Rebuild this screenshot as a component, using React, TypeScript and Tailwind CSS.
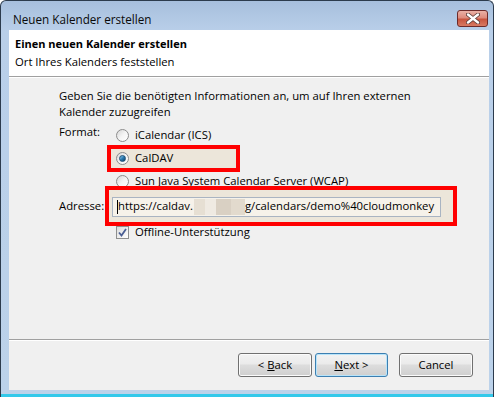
import React from 'react';

const font = { fontFamily: '"Open Sans", "Noto Sans", sans-serif' };

const Radio = ({ checked }: { checked?: boolean }) => (
  <span className="relative flex h-[13px] w-[13px] shrink-0 items-center justify-center rounded-full border border-[#8c8c8c] bg-gradient-to-br from-[#d6d6d6] via-[#f4f4f4] to-white">
    {checked && (
      <span className="h-[7px] w-[7px] rounded-full border border-[#1d4f74] bg-gradient-to-br from-[#8fd0f2] via-[#2a7ab0] to-[#10436b]" />
    )}
  </span>
);

const Checkbox = () => (
  <span className="flex h-[13px] w-[13px] shrink-0 items-center justify-center border border-[#8e8f8f] bg-gradient-to-br from-[#dcdcdc] to-white">
    <svg width="9" height="9" viewBox="0 0 9 9">
      <path d="M1 4.5 L3.5 7.5 L8 1" fill="none" stroke="#4a5e94" strokeWidth="1.8" />
    </svg>
  </span>
);

const Button = ({ children, focused }: { children: React.ReactNode; focused?: boolean }) => (
  <div
    className={`flex h-[24px] items-center justify-center rounded-[3px] border bg-[linear-gradient(#f2f2f2_0%,#ebebeb_45%,#dddddd_50%,#cfcfcf_100%)] text-[11.3px] text-black ${
      focused ? 'border-[#3c7fb1] shadow-[inset_0_0_0_1px_#b8e4fa]' : 'border-[#707070] shadow-[inset_0_0_0_1px_#fbfbfb]'
    }`}
  >
    {children}
  </div>
);

const CloseButton = () => (
  <div className="flex h-[17px] w-[31px] items-center justify-center rounded-[3px] border border-[#6d2b2a] bg-[linear-gradient(#eab1a6_0%,#df8c7d_45%,#c8553f_55%,#d87a62_100%)]">
    <svg width="14" height="11" viewBox="0 0 14 11">
      <path d="M2 1.5 L12 9.5 M12 1.5 L2 9.5" stroke="#5a3a36" strokeWidth="4" strokeLinecap="round" />
      <path d="M2 1.5 L12 9.5 M12 1.5 L2 9.5" stroke="#ffffff" strokeWidth="2.4" strokeLinecap="round" />
    </svg>
  </div>
);

export default function App() {
  return (
    <div className="h-[397px] w-[496px] overflow-hidden bg-white text-[11.3px] text-black" style={font}>
      <div className="flex h-[397px] w-[494px] flex-col rounded-t-[6px] border border-b-0 border-[#2c3b4d] bg-[linear-gradient(#a7bfdd_0px,#b9cfe9_30px,#bcd2ea_100%)]">
        {/* title bar */}
        <div className="flex h-[29px] items-start justify-between pl-[12px] pr-[5px]">
          <span className="mt-[10px] text-[11.7px] leading-[16px] text-[#0a0a0a]">Neuen Kalender erstellen</span>
          <div className="mt-[9px]">
            <CloseButton />
          </div>
        </div>

        {/* client area */}
        <div className="ml-[8px] flex h-[360px] w-[480px] flex-col bg-[#f0f0f0]">
          <div className="h-[46px] bg-white pl-[6px] pt-[5px] leading-[18px]">
            <div className="text-[11px] font-bold">Einen neuen Kalender erstellen</div>
            <div>Ort Ihres Kalenders feststellen</div>
          </div>
          <div className="h-px bg-[#a0a0a0]" />
          <div className="h-px bg-white" />

          <div className="relative flex h-[261px] flex-col pl-[50px] pt-[10px]">
            <p className="leading-[16px]">
              Geben Sie die benötigten Informationen an, um auf Ihren externen
              <br />
              Kalender zuzugreifen
            </p>

            <div className="mt-[4px] grid grid-cols-[57px_1fr]">
              <div className="leading-[16px]">Format:</div>
              <div className="flex flex-col">
                <div className="flex h-[23px] items-center gap-[6px]">
                  <Radio />
                  <span>iCalendar (ICS)</span>
                </div>
                <div className="relative flex h-[23px] items-center gap-[6px]">
                  <div className="absolute left-[-9px] top-[-2px] h-[27px] w-[133px] border-[4px] border-[#ff0000] bg-[#ece6da]" />
                  <span className="relative">
                    <Radio checked />
                  </span>
                  <span className="relative">CalDAV</span>
                </div>
                <div className="flex h-[23px] items-center gap-[6px]">
                  <Radio />
                  <span>Sun Java System Calendar Server (WCAP)</span>
                </div>
              </div>

              <div className="flex h-[27px] items-center">Adresse:</div>
              <div className="relative flex h-[27px] items-center">
                <div className="absolute left-[-11px] top-[-7px] h-[40px] w-[352px] border-[4px] border-[#ff0000] bg-[#ece6da]" />
                <div className="relative ml-[-4px] flex h-[20px] w-[329px] items-center overflow-hidden whitespace-nowrap border border-[#a9b4c2] bg-[#f6f2ea] pl-[4px]">
                  <span className="h-[14px] w-px shrink-0 bg-black" />
                  <span>https://caldav.</span>
                  <span className="ml-[1px] h-[16px] w-[11px] shrink-0 bg-[#e6dfd3]" />
                  <span className="h-[16px] w-[11px] shrink-0 bg-[#efeae2]" />
                  <span className="h-[16px] w-[15px] shrink-0 bg-[#d9d0c3]" />
                  <span className="h-[16px] w-[14px] shrink-0 bg-[#e2dacd]" />
                  <span>g/calendars/demo%40cloudmonkey</span>
                </div>
              </div>

              <div />
              <div className="flex h-[24px] items-center gap-[6px]">
                <Checkbox />
                <span>Offline-Unterstützung</span>
              </div>
            </div>
          </div>

          <div className="h-px bg-[#a0a0a0]" />
          <div className="h-px bg-white" />

          <div className="flex flex-1 items-start justify-end pr-[16px] pt-[12px]">
            <div className="w-[74px]">
              <Button>
                &lt; <span className="ml-[3px] underline">B</span>ack
              </Button>
            </div>
            <div className="ml-[3px] w-[73px]">
              <Button focused>
                <span className="underline">N</span>ext &gt;
              </Button>
            </div>
            <div className="ml-[11px] w-[74px]">
              <Button>Cancel</Button>
            </div>
          </div>
        </div>

        <div className="h-[4px]" />
        <div className="h-[3px] bg-[#33c9ea]" />
      </div>
    </div>
  );
}
